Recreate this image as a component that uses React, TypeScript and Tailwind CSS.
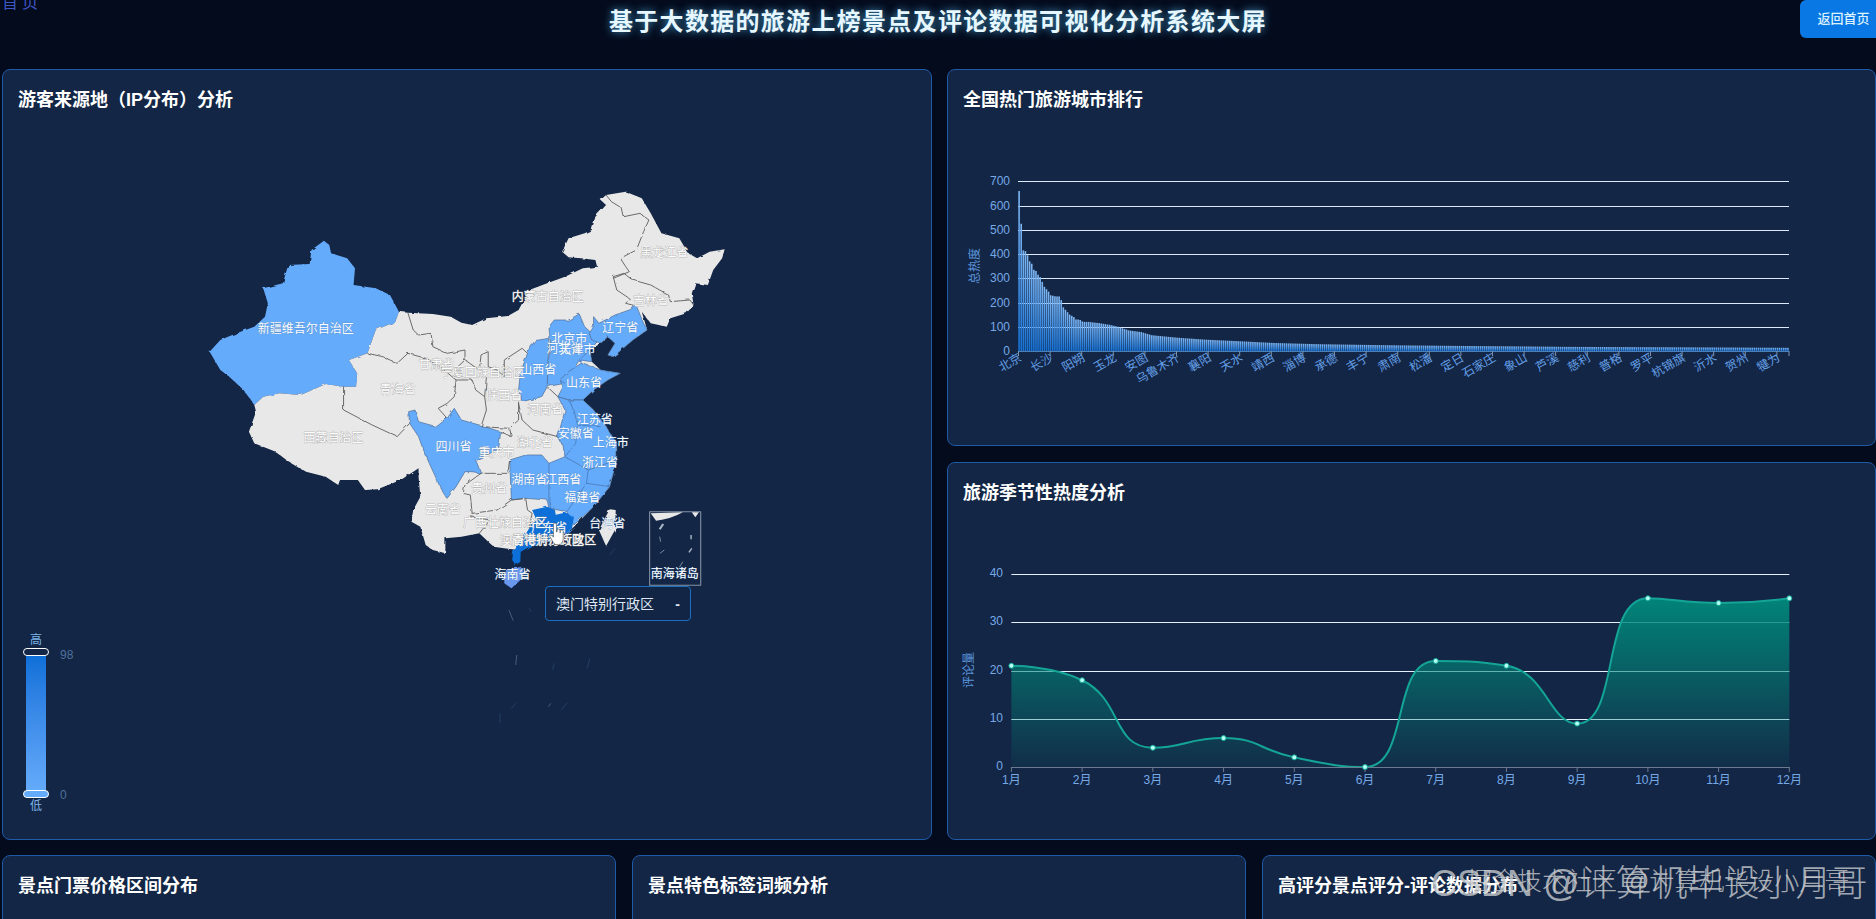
import React from "react";

const cityLabels = [
  "北京", "长沙", "阳朔", "玉龙", "安图", "乌鲁木齐", "襄阳", "天水", "靖西", "淄博", "承德", "丰宁", "肃南",
  "松潘", "定日", "石家庄", "象山", "芦溪", "慈利", "普格", "罗平", "杭锦旗", "沂水", "贺州", "犍为",
];

const topBars = [
  660, 525, 415, 412, 395, 370, 360, 335, 330, 315, 305, 285, 265, 255, 245, 230, 228, 226, 225, 225, 210, 180, 170,
  160, 150, 145, 140, 130, 130, 128, 122, 120, 120,
];
const barAnchors = [
  [33, 120], [38, 115], [43, 108], [47, 100], [52, 85], [58, 78], [63, 65], [75, 55], [88, 47], [105, 40], [121, 33],
  [142, 28], [165, 25], [181, 23], [260, 17], [366, 13],
];

function barValue(i: number) {
  if (i < topBars.length) return topBars[i];
  for (let k = 1; k < barAnchors.length; k++) {
    const [a, va] = barAnchors[k - 1];
    const [b, vb] = barAnchors[k];
    if (i <= b) return va + ((vb - va) * (i - a)) / (b - a);
  }
  return 13;
}

const seasonData = [21, 18, 4, 6, 2, 0, 22, 21, 9, 35, 34, 35];
const seasonX = (i: number) => 1011.4 + i * 70.72;
const seasonY = (v: number) => 767 - v * 4.82;
const crisp = (y: number) => Math.round(y) + 0.5;

// same smoothing as the chart lib uses for line series
function smoothPath(p: number[][]) {
  const s = 0.5;
  const clamp = (v: number, a: number, b: number) => Math.min(Math.max(v, Math.min(a, b)), Math.max(a, b));
  let d = `M${p[0][0]} ${p[0][1]}`;
  let cp0 = p[0];
  for (let i = 0; i < p.length - 1; i++) {
    const cur = p[i + 1];
    const prev = p[i];
    const next = p[i + 2];
    let cp1 = cur;
    let nextCp = cur;
    if (next) {
      const vx = next[0] - prev[0];
      const vy = next[1] - prev[1];
      const l0 = Math.hypot(cur[0] - prev[0], cur[1] - prev[1]);
      const l1 = Math.hypot(next[0] - cur[0], next[1] - cur[1]);
      const r = l1 / (l0 + l1);
      const nx = cur[0] + vx * r * s;
      const ny = clamp(cur[1] + vy * r * s, cur[1], next[1]);
      const dx = nx - cur[0];
      const dy = ny - cur[1];
      const px = cur[0] - (dx * l0) / l1;
      const py = clamp(cur[1] - (dy * l0) / l1, cur[1], prev[1]);
      const dx2 = cur[0] - px;
      const dy2 = cur[1] - py;
      nextCp = [cur[0] + (dx2 * l1) / l0, cur[1] + (dy2 * l1) / l0];
      cp1 = [px, py];
    }
    d += ` C${cp0[0]} ${cp0[1]} ${cp1[0]} ${cp1[1]} ${cur[0]} ${cur[1]}`;
    cp0 = nextCp;
  }
  return d;
}

function Panel({ title, className, children }: { title: string; className?: string; children?: React.ReactNode }) {
  return (
    <div className={`relative overflow-hidden rounded-lg border border-[#1e5aa6] bg-[#132645] ${className ?? ""}`}>
      <h3 className="px-[15px] pt-[18px] text-lg leading-6 font-bold text-white">{title}</h3>
      {children}
    </div>
  );
}

const xinjiang =
  "375,212 390,225 395,250 440,265 462,295 458,345 520,355 560,375 585,425 575,455 520,480 497,550 445,570 468,610 465,650 430,650 380,642 310,675 250,670 205,680 180,705 150,660 110,620 85,600 55,545 85,510 130,490 180,470 210,440 218,400 205,355 260,340 275,285 335,282 340,240";

const grayBase =
  "610,428 680,432 730,440 760,458 790,465 830,445 890,438 920,420 950,360 1000,340 1050,320 1100,295 1140,290 1135,270 1095,265 1060,262 1042,245 1060,205 1105,190 1125,180 1135,140 1165,105 1150,90 1165,75 1220,65 1265,85 1290,130 1320,190 1370,205 1395,250 1420,265 1455,245 1497,238 1490,265 1465,300 1450,345 1415,340 1405,370 1410,405 1390,430 1345,445 1335,470 1290,460 1265,425 1280,480 1240,510 1185,560 1170,555 1190,520 1170,500 1150,520 1120,540 1125,575 1150,600 1205,610 1170,630 1130,660 1100,690 1130,720 1165,770 1195,820 1195,870 1175,950 1130,1010 1075,1070 1040,1105 960,1125 920,1140 880,1135 850,1130 810,1090 760,1100 715,1105 715,1150 680,1140 660,1125 645,1070 620,1055 625,1020 645,980 640,920 640,895 590,930 525,958 490,960 470,930 420,930 415,945 380,920 325,905 270,870 240,845 180,820 165,785 170,770 185,725 180,705 205,680 250,670 310,675 380,642 430,650 465,650 468,610 445,570 497,550 520,480 575,455 585,425";

const blueShapes = [
  "1005,470 1020,450 1060,450 1090,432 1105,470 1125,490 1140,515 1120,540 1125,575 1090,570 1050,640 1000,650 1000,590 1010,530",
  "965,512 1005,505 1000,650 985,680 930,695 920,660 925,610 945,550",
  "1130,440 1145,460 1190,435 1230,420 1250,408 1270,460 1280,480 1240,510 1185,560 1170,555 1190,520 1170,500 1150,520 1125,510 1118,490 1130,470",
  "1035,630 1060,605 1095,580 1125,590 1150,600 1205,610 1170,630 1130,660 1100,690 1060,690 1030,680 1045,650",
  "1030,680 1060,690 1100,690 1130,720 1165,770 1195,820 1195,870 1175,950 1130,1010 1075,1065 1055,1025 1005,1015 1000,990 940,985 900,990 895,870 940,855 985,855 1005,880 1050,860 1045,830 1030,800 1040,760 1050,720",
  "630,720 640,755 690,770 720,745 740,715 760,750 810,765 870,785 865,830 860,840 800,870 815,910 790,905 770,905 745,950 720,985 700,950 670,880 650,830 640,800 615,760 612,725",
];

const grayBorders = [
  "1165,75 1180,95 1210,115 1215,140 1260,130 1285,150 1270,185 1250,240 1205,265 1220,290 1230,305 1185,325",
  "1185,320 1215,310 1240,330 1290,345 1340,375 1345,395 1400,390 1410,405",
  "1185,320 1195,360 1230,385 1220,400 1250,408",
  "610,428 625,480 640,495 675,490 680,530 720,550 770,540 770,570 750,590",
  "497,550 540,560 580,580 610,550 660,565 700,590 745,630 740,680 720,700 695,715 720,745",
  "430,650 430,720 510,765 580,800 615,760",
  "770,570 810,600 815,555 835,545 835,590 860,600 880,620 880,570 930,535 945,550",
  "745,630 790,630 800,660 825,680 830,720 815,770 895,775 920,750 920,695",
  "830,620 825,680",
  "920,700 930,750 960,780 1030,800",
  "895,775 900,800 870,785",
  "1000,650 1030,680",
  "895,870 890,910 815,910 770,945 765,970 785,975 790,1030 860,1020 900,990 940,985 945,1020 958,1030 950,1075",
  "790,1030 785,1040 840,1050 810,1090",
];

const innerBlueBorders = [
  "1035,630 1050,640",
  "1060,690 1075,720 1085,765 1150,770",
  "1050,860 1115,900 1110,940 1175,950",
  "1115,900 1195,870",
  "1005,880 1005,990 1010,1015",
  "1110,940 1055,1025",
  "1085,765 1080,820 1050,860",
  "1120,540 1090,570 1095,580",
];

const guangdong =
  "958,1020 1000,1010 1022,1020 1024,1034 1050,1028 1075,1040 1070,1075 1040,1105 960,1125 926,1145 925,1175 912,1185 902,1170 905,1145 935,1100 950,1075 970,1050";

const mapLabels: [string, number, number, boolean?][] = [
  ["新疆维吾尔自治区", 324, 490, true],
  ["内蒙古自治区", 1002, 392],
  ["黑龙江省", 1328, 262],
  ["吉林省", 1290, 405],
  ["辽宁省", 1205, 485, true],
  ["北京市", 1062, 520, true],
  ["河北省", 1048, 548, true],
  ["天津市", 1085, 552, true],
  ["山西省", 975, 612, true],
  ["山东省", 1103, 650, true],
  ["甘肃省", 690, 598],
  ["宁夏回族自治区", 820, 620],
  ["青海省", 582, 672],
  ["陕西省", 880, 690],
  ["河南省", 995, 733],
  ["江苏省", 1133, 763, true],
  ["安徽省", 1080, 803, true],
  ["上海市", 1178, 830, true],
  ["西藏自治区", 402, 815],
  ["四川省", 738, 842, true],
  ["重庆市", 858, 862],
  ["湖北省", 965, 832],
  ["浙江省", 1148, 892, true],
  ["湖南省", 950, 943, true],
  ["江西省", 1045, 943, true],
  ["贵州省", 838, 970],
  ["福建省", 1098, 996, true],
  ["云南省", 708, 1033],
  ["广西壮族自治区", 882, 1072],
  ["广东省", 1005, 1085, true],
  ["澳门特别行政区", 985, 1124],
  ["香港特别行政区", 1020, 1122],
  ["台湾省", 1168, 1075, true],
  ["海南省", 903, 1228, true],
  ["南海诸岛", 1357, 1225, true],
];

function ChinaMap() {
  return (
    <svg width={560} height={630} className="mt-[58px] ml-[187px] block">
      <defs>
        {/* rough coast and border lines */}
        <filter id="rough" x="-5%" y="-5%" width="110%" height="110%">
          <feTurbulence type="fractalNoise" baseFrequency="0.05" numOctaves={2} seed={4} />
          <feDisplacementMap in="SourceGraphic" scale={9} />
        </filter>
      </defs>
      <g transform="scale(0.35714 0.33333)" strokeLinejoin="round">
        <g filter="url(#rough)">
          <polygon points={xinjiang} fill="#65abfb" />
          <polygon points={grayBase} fill="#e8e8e8" />
          {blueShapes.map((s, i) => (
            <polygon key={i} points={s} fill="#65abfb" stroke="#4a6a94" strokeWidth={2} />
          ))}
          <polygon points={guangdong} fill="#0a6fd8" />
          <polygon points="885,1200 930,1190 935,1220 900,1255 880,1240 880,1220" fill="#6a97ee" />
          <polygon points="1145,1080 1175,1018 1192,1020 1190,1080 1165,1128" fill="#e8e8e8" />
          {grayBorders.map((s, i) => (
            <polyline key={i} points={s} fill="none" stroke="#5c5c5c" strokeWidth={2.6} />
          ))}
          {innerBlueBorders.map((s, i) => (
            <polyline key={i} points={s} fill="none" stroke="#4a7ab8" strokeWidth={2.4} />
          ))}
        </g>
        {/* south china sea bits */}
        <g fill="none" stroke="#2c4a70" strokeWidth={2}>
          <path d="M893 1320 L905 1352" stroke="#5d7694" />
          <path d="M915 1455 L912 1485" stroke="#5d7694" />
          <path d="M1120 1465 L1112 1495" />
          <path d="M1040 1620 L1056 1598" />
          <path d="M868 1630 L868 1660" />
          <path d="M1010 1600 L1004 1610" stroke="#5d7694" />
          <path d="M1190 1135 L1175 1155" />
          <path d="M950 1315 L955 1325" />
          <path d="M1020 1480 L1015 1500" />
          <path d="M900 1615 L912 1600" />
        </g>
        <rect x={1287} y={1025} width={143} height={221} fill="none" stroke="#8593a6" strokeWidth={3} />
        <path d="M1290 1030 L1380 1027 Q1345 1048 1305 1052Z" fill="#e8e8e8" />
        <path d="M1405 1027 L1425 1027 L1415 1042Z" fill="#e8e8e8" />
        <g fill="none" stroke="#a9b6c6">
          <path d="M1325 1062 L1315 1078" strokeWidth={6} />
          <path d="M1403 1095 L1403 1108" strokeWidth={4} />
          <path d="M1405 1135 L1397 1147" strokeWidth={4} />
          <path d="M1328 1140 L1316 1150" strokeWidth={2} />
          <path d="M1315 1100 L1318 1115" strokeWidth={2} />
          <path d="M1380 1175 L1370 1192" strokeWidth={2} />
        </g>
      </g>
      {mapLabels.map(([t, x, y, onBlue]) => (
        <text
          key={t}
          x={x / 2.8}
          y={y / 3}
          textAnchor="middle"
          fontSize={12}
          fill="#ffffff"
          stroke={onBlue ? "#4d7fb8" : "#9a9a9a"}
          strokeWidth={onBlue ? 0.4 : 0.6}
          paintOrder="stroke"
        >
          {t}
        </text>
      ))}
    </svg>
  );
}

function CityChart() {
  const yOf = (v: number) => 351 - v * 0.2424;
  const step = 771 / 366;
  return (
    <svg width={928} height={330} className="block">
      <defs>
        <linearGradient id="barFill" x1="0" y1="0" x2="0" y2="1">
          <stop offset="0" stopColor="#80b8f4" />
          <stop offset="1" stopColor="#1470d4" />
        </linearGradient>
      </defs>
      <g transform="translate(-948 -112)" fontSize={12}>
        {[0, 100, 200, 300, 400, 500, 600, 700].map((v) => (
          <g key={v}>
            <text x={1010} y={yOf(v) + 4} textAnchor="end" fill="#77a9e6">
              {v}
            </text>
            {v > 0 && <line x1={1018} x2={1789} y1={crisp(yOf(v))} y2={crisp(yOf(v))} stroke="#dce8fb" />}
          </g>
        ))}
        {Array.from({ length: 366 }).map((_, i) => {
          const h = barValue(i) * 0.2424;
          return <rect key={i} x={1018.3 + i * step} y={351 - h} width={1.6} height={h} fill="url(#barFill)" />;
        })}
        <line x1={1018} x2={1789} y1={351.5} y2={351.5} stroke="#4d7fb4" />
        {cityLabels.map((c, i) => {
          const x = 1018.5 + i * 15 * step;
          return (
            <g key={c}>
              <line x1={x} x2={x} y1={351} y2={356} stroke="#7f95b0" />
              <text x={x + 4} y={360} textAnchor="end" fill="#639fe6" transform={`rotate(-30 ${x + 4} 360)`}>
                {c}
              </text>
            </g>
          );
        })}
        <line x1={1789} x2={1789} y1={351} y2={356} stroke="#7f95b0" />
        <text x={979} y={266} textAnchor="middle" fill="#5b95dd" transform="rotate(-90 979 266)">
          总热度
        </text>
      </g>
    </svg>
  );
}

function SeasonChart() {
  const pts = seasonData.map((v, i) => [seasonX(i), seasonY(v)]);
  const line = smoothPath(pts);
  const area = `${line} L${seasonX(11)} 767 L${seasonX(0)} 767Z`;
  return (
    <svg width={928} height={330} className="block">
      <defs>
        <linearGradient id="seasonFill" x1="0" y1="0" x2="0" y2="1">
          <stop offset="0" stopColor="#00897b" stopOpacity={0.95} />
          <stop offset="1" stopColor="#00897b" stopOpacity={0.08} />
        </linearGradient>
      </defs>
      <g transform="translate(-948 -505)" fontSize={12}>
        {[0, 10, 20, 30, 40].map((v) => (
          <g key={v}>
            <text x={1003} y={seasonY(v) + 3} textAnchor="end" fill="#77a9e6">
              {v}
            </text>
            {v > 0 && <line x1={1011.4} x2={1789.3} y1={crisp(seasonY(v))} y2={crisp(seasonY(v))} stroke="#e6effc" />}
          </g>
        ))}
        <path d={area} fill="url(#seasonFill)" />
        <path d={line} fill="none" stroke="#14a597" strokeWidth={2} />
        <line x1={1011} x2={1790} y1={767.5} y2={767.5} stroke="#6b7a90" />
        {seasonData.map((v, i) => (
          <g key={i}>
            <line x1={seasonX(i)} x2={seasonX(i)} y1={767} y2={772} stroke="#6b7a90" />
            <circle cx={seasonX(i)} cy={seasonY(v)} r={2.5} fill="#b5fff2" stroke="#12a99a" />
            <text x={seasonX(i)} y={784} textAnchor="middle" fill="#77a9e6">
              {i + 1}月
            </text>
          </g>
        ))}
        <text x={973} y={670} textAnchor="middle" fill="#5b95dd" transform="rotate(-90 973 670)">
          评论量
        </text>
      </g>
    </svg>
  );
}

export default function App() {
  return (
    <div className="relative h-[919px] w-[1876px] overflow-hidden bg-[#040b1d] pl-[2px] font-['Liberation_Sans','Noto_Sans_CJK_SC',sans-serif]">
      <div className="relative -ml-[2px] h-[69px]">
        <span className="absolute -top-[9px] left-[2px] text-base tracking-[4px] text-[#3d57c4]">首页</span>
        <h1 className="pt-[6px] pl-[609px] text-2xl leading-[32px] font-bold tracking-[1.3px] whitespace-nowrap text-[#e6f7ff] [text-shadow:0_0_8px_rgba(90,200,255,0.75)]">
          基于大数据的旅游上榜景点及评论数据可视化分析系统大屏
        </h1>
        <button className="absolute top-0 -right-[11px] h-[38px] w-[87px] rounded-l-md bg-[#0a78e4] text-[13px] font-medium text-[#def3ff]">
          返回首页
        </button>
      </div>

      <div className="grid h-[771px] grid-cols-[930px_929px] gap-x-[15px]">
        <Panel title="游客来源地（IP分布）分析">
          <ChinaMap />
          {/* visual map legend */}
          <div className="absolute top-[562px] left-[20px] flex w-[26px] flex-col items-center">
            <span className="text-xs leading-4 text-[#7eb4ea]">高</span>
            <span className="z-10 h-[8px] w-[26px] rounded-full border-[1.5px] border-white bg-[#132645]" />
            <span className="-my-[2px] h-[138px] w-[20px] bg-linear-to-b from-[#0a6fd8] to-[#65abfb]" />
            <span className="z-10 h-[8px] w-[26px] rounded-full border-[1.5px] border-white bg-[#65abfb]" />
            <span className="text-xs leading-4 text-[#7eb4ea]">低</span>
          </div>
          <span className="absolute top-[577px] left-[57px] text-xs text-[#4f719c]">98</span>
          <span className="absolute top-[717px] left-[57px] text-xs text-[#4f719c]">0</span>
          {/* tooltip */}
          <div className="absolute top-[516px] left-[542px] flex h-[35px] w-[146px] items-center justify-between rounded border border-[#1b6fc2] bg-[#122544] px-[10px] text-sm text-[#dde6f2]">
            <span>澳门特别行政区</span>
            <span className="font-bold">-</span>
          </div>
          {/* hand cursor */}
          <svg viewBox="0 0 15 22" className="absolute top-[452px] left-[546px] h-[24px] w-[16px]">
            <path
              d="M4.2 2.2a1.4 1.4 0 0 1 2.8 0V9h.6V7.6a1.3 1.3 0 0 1 2.6 0V9.6h.5V8.4a1.3 1.3 0 0 1 2.6 0v7c0 3-1.7 5.6-4.6 5.6H7.5c-2 0-3-1.2-4-3L.8 13.4c-.6-1 .9-2.2 1.8-1.2l1.6 1.8Z"
              fill="#ffffff"
              stroke="#555555"
              strokeWidth={0.6}
            />
          </svg>
        </Panel>

        <div className="flex flex-col gap-y-[16px]">
          <Panel title="全国热门旅游城市排行" className="h-[377px]">
            <CityChart />
          </Panel>
          <Panel title="旅游季节性热度分析" className="h-[378px]">
            <SeasonChart />
          </Panel>
        </div>
      </div>

      <div className="mt-[15px] grid grid-cols-[614px_614px_614px] gap-x-[16px]">
        <Panel title="景点门票价格区间分布" className="h-[100px]" />
        <Panel title="景点特色标签词频分析" className="h-[100px]" />
        <Panel title="高评分景点评分-评论数据分布" className="h-[100px]" />
      </div>

      {/* watermarks burnt into the capture */}
      <span className="absolute top-[862px] left-[1431px] text-[36px] leading-[44px] font-light whitespace-nowrap text-[#c8ccd0]/80">
        CSDN @计算机毕设小月哥
      </span>
      <span className="absolute top-[865px] left-[1467px] text-[25px] leading-[32px] font-light whitespace-nowrap text-[#cccccc]/80">
        掘金技术社区 @计算机毕设小月哥
      </span>
    </div>
  );
}
